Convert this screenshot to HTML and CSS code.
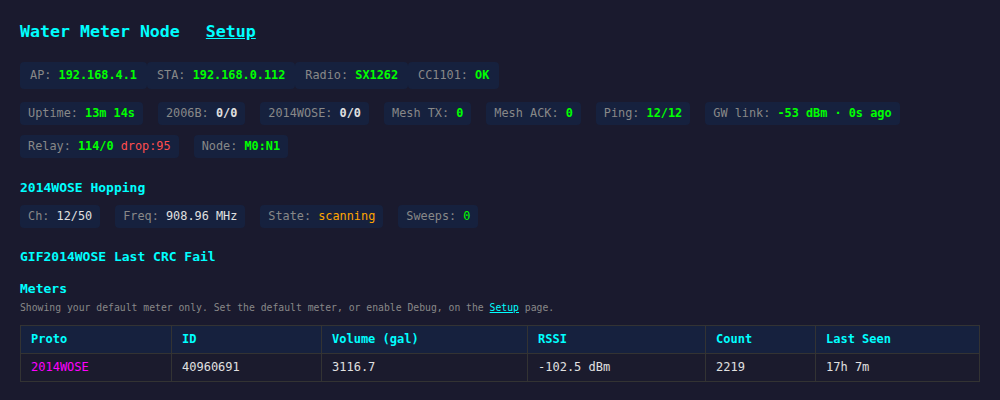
FILE: index.html
```html
<!DOCTYPE html>
<html lang="en">
<head>
    <meta charset="UTF-8">
    <meta name="viewport" content="width=device-width, initial-scale=1.0">
    <title>Water Meter Node</title>
    <link rel="stylesheet" href="styles.css">
</head>
<body>
    <h1>Water Meter Node <a href="/setup" class="nav-link">Setup</a></h1>

    <div class="info-bar">
        <span class="chip">AP: <b>192.168.4.1</b></span>
        <span class="chip">STA: <b>192.168.0.112</b></span>
        <span class="chip">Radio: <b>SX1262</b></span>
        <span class="chip">CC1101: <b>OK</b></span>
    </div>

    <div class="stats">
        <span class="stat">Uptime: <b>13m 14s</b></span>
        <span class="stat">2006B: <b class="plain">0/0</b></span>
        <span class="stat">2014WOSE: <b class="plain">0/0</b></span>
        <span class="stat">Mesh TX: <b>0</b></span>
        <span class="stat">Mesh ACK: <b>0</b></span>
        <span class="stat">Ping: <b>12/12</b></span>
        <span class="stat">GW link: <b>-53 dBm · 0s ago</b></span>
        <span class="stat">Relay: <b>114/0</b> <span class="bad">drop:95</span></span>
        <span class="stat">Node: <b>M0:N1</b></span>
    </div>

    <h3>2014WOSE Hopping</h3>
    <div class="stats">
        <span class="stat">Ch: <span class="plain">12/50</span></span>
        <span class="stat">Freq: <span class="plain">908.96 MHz</span></span>
        <span class="stat">State: <span class="warn">scanning</span></span>
        <span class="stat">Sweeps: <span class="ok">0</span></span>
    </div>

    <h3 class="crc-title">GIF2014WOSE Last CRC Fail</h3>

    <h3 class="meters-title">Meters</h3>
    <p class="note">Showing your default meter only. Set the default meter, or enable Debug, on the <a href="/setup">Setup</a> page.</p>

    <table class="meters">
        <thead>
            <tr>
                <th class="col-proto">Proto</th>
                <th class="col-id">ID</th>
                <th class="col-vol">Volume (gal)</th>
                <th class="col-rssi">RSSI</th>
                <th class="col-count">Count</th>
                <th>Last Seen</th>
            </tr>
        </thead>
        <tbody>
            <tr>
                <td class="proto">2014WOSE</td>
                <td>40960691</td>
                <td>3116.7</td>
                <td>-102.5 dBm</td>
                <td>2219</td>
                <td>17h 7m</td>
            </tr>
        </tbody>
    </table>
</body>
</html>
```

FILE: styles.css
```css
body {
    margin: 0;
    padding: 22px 20px 20px;
    background: #1a1a2e;
    color: #e0e0e0;
    font-family: 'DejaVu Sans Mono', 'Liberation Mono', monospace;
    font-size: 12px;
}

h1 {
    font-size: 16.6px;
    color: #00ffff;
    margin: 0 0 21px;
}

.nav-link {
    color: #00ffff;
    margin-left: 16px;
}

.info-bar {
    display: flex;
    flex-wrap: wrap;
    margin-bottom: 13px;
}

.chip {
    background: #16213e;
    border-radius: 4px;
    padding: 6px 10px;
    font-size: 11.85px;
    line-height: 15px;
    color: #888;
}

.stats {
    display: flex;
    flex-wrap: wrap;
    gap: 10px 15px;
}

.stat {
    background: #16213e;
    border-radius: 4px;
    padding: 4px 8px;
    font-size: 11.85px;
    line-height: 15px;
    color: #888;
}

b {
    color: #00ff00;
}

.plain {
    color: #e0e0e0;
    font-weight: normal;
}

b.plain {
    font-weight: bold;
}

.ok {
    color: #00ff00;
}

.warn {
    color: #ffa500;
}

.bad {
    color: #ff4d4d;
}

h3 {
    font-size: 13px;
    color: #00ffff;
    margin: 22px 0 10px;
}

.crc-title {
    margin: 21px 0 0;
}

.meters-title {
    margin: 17px 0 6px;
}

.note {
    font-size: 9.75px;
    color: #888;
    margin: 0 0 12px;
}

.note a {
    color: #00ffff;
}

.meters {
    width: 100%;
    border-collapse: collapse;
}

.meters th,
.meters td {
    border: 1px solid #333;
    padding: 6px 10px;
    line-height: 15px;
    text-align: left;
}

.meters th {
    background: #16213e;
    color: #00ffff;
}

.meters td {
    background: #1b1b2d;
}

.meters td.proto {
    color: #ff00ff;
}

.col-proto { width: 130px; }
.col-id { width: 129px; }
.col-vol { width: 185px; }
.col-rssi { width: 157px; }
.col-count { width: 89px; }
```
